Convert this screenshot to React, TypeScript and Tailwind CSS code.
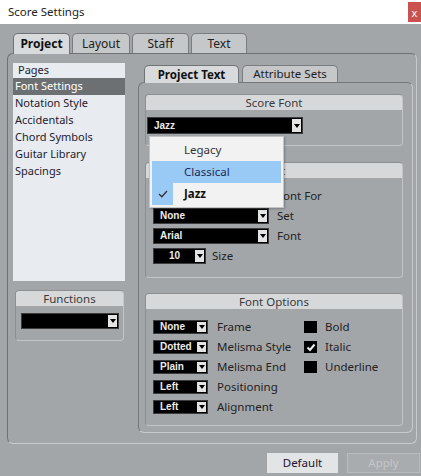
import React from "react";

const ui = "font-['Noto_Sans',sans-serif]";
const sel = "font-['Liberation_Sans',Arial,sans-serif] font-bold text-[10px] text-[#ececec]";

function Arrow() {
  return (
    <div className="w-0 h-0 border-l-[3px] border-r-[3px] border-t-[4px] border-l-transparent border-r-transparent border-t-black" />
  );
}

function Select({ value, w, h = "h-[16px]", center = false }: { value: string; w: string; h?: string; center?: boolean }) {
  return (
    <div className={`flex ${w} ${h} bg-black border border-[#3c3c3c]`}>
      <div className={`flex-1 flex items-center ${center ? "justify-center" : "pl-[6px]"} ${sel} leading-none`}>
        {value}
      </div>
      <div className="w-[9px] my-[1px] mr-[1px] bg-[#e4e4e4] flex items-center justify-center">
        <Arrow />
      </div>
    </div>
  );
}

function Group({ title, h, children, className = "" }: { title: string; h: string; children?: React.ReactNode; className?: string }) {
  return (
    <div
      className={`${h} ${className} flex flex-col rounded-[4px] border-l border-t border-[#8c8f92] border-r-[#c3c5c7] border-b-[#c3c5c7] border-r border-b`}
    >
      <div className="h-[15px] bg-[#d6d8da] rounded-t-[3px] flex items-center justify-center text-[11.5px] text-[#3a3a3a] leading-none">
        {title}
      </div>
      {children}
    </div>
  );
}

function Check({ on }: { on?: boolean }) {
  return (
    <div className="w-[13px] h-[12px] bg-black flex items-center justify-center">
      {on && (
        <svg width="10" height="9" viewBox="0 0 10 9">
          <polyline points="1.5,4.5 4,7 8.5,1.5" fill="none" stroke="#f0f0f0" strokeWidth="2" />
        </svg>
      )}
    </div>
  );
}

const pages = ["Notation Style", "Accidentals", "Chord Symbols", "Guitar Library", "Spacings"];

const opts: [string, string, string?, boolean?][] = [
  ["None", "Frame", "Bold", false],
  ["Dotted", "Melisma Style", "Italic", true],
  ["Plain", "Melisma End", "Underline", false],
  ["Left", "Positioning"],
  ["Left", "Alignment"],
];

export default function App() {
  return (
    <div className={`${ui} w-[421px] h-[476px] bg-[#a3a6a9] flex flex-col relative overflow-hidden`}>
      {/* title bar */}
      <div className="h-[24px] bg-white flex items-start shrink-0">
        <div className="pl-[8px] pt-[3px] text-[11.5px] text-[#222]">Score Settings</div>
        <div className="ml-auto mt-[2px] w-[13px] h-[20px] bg-[#c9514f] text-white text-[11px] flex items-center justify-center leading-none">
          x
        </div>
      </div>

      <div className="px-[7px] pt-[8px]">
        {/* main tabs */}
        <div className="flex items-end h-[21px] pl-[6px] gap-[2px]">
          <div className="w-[57px] h-[21px] -mb-px z-10 rounded-t-[5px] border border-b-0 border-[#707376] bg-[#d8dadc] flex items-center justify-center text-[12px] font-bold text-[#111]">
            Project
          </div>
          <div className="w-[58px] h-[20px] rounded-t-[5px] border border-b-0 border-[#7a7d80] bg-[#c5c7c9] flex items-center justify-center text-[12px] text-[#222]">
            Layout
          </div>
          <div className="w-[57px] h-[20px] rounded-t-[5px] border border-b-0 border-[#7a7d80] bg-[#c5c7c9] flex items-center justify-center text-[12px] text-[#222]">
            Staff
          </div>
          <div className="w-[56px] h-[20px] rounded-t-[5px] border border-b-0 border-[#7a7d80] bg-[#c5c7c9] flex items-center justify-center text-[12px] text-[#222]">
            Text
          </div>
        </div>

        {/* main panel */}
        <div className="w-[410px] h-[391px] rounded-[6px] border-l border-t border-[#6f7275] border-r border-b border-r-[#c8cacc] border-b-[#c8cacc] flex items-start pl-[5px] pt-[9px]">
          {/* left column */}
          <div className="w-[112px] flex flex-col">
            <div className="h-[218px] bg-[#e8ecf0] flex flex-col text-[11px] text-[#1e1b2e]">
              <div className="h-[15px] pl-[5px] flex items-center">Pages</div>
              <div className="h-[17px] pl-[2px] flex items-center bg-[#6d7073] text-white">Font Settings</div>
              {pages.map((p) => (
                <div key={p} className="h-[17px] pl-[2px] flex items-center">
                  {p}
                </div>
              ))}
            </div>
            <Group title="Functions" h="h-[51px]" className="mt-[9px] ml-[2px] w-[109px]">
              <div className="pl-[5px] pt-[7px]">
                <Select value="" w="w-[98px]" />
              </div>
            </Group>
          </div>

          {/* right column */}
          <div className="ml-[13px] mt-[1px] w-[275px] flex flex-col">
            <div className="flex items-end h-[18px] pl-[6px] gap-[3px]">
              <div className="w-[95px] h-[18px] -mb-px z-10 rounded-t-[5px] border border-b-0 border-[#707376] bg-[#d8dadc] flex items-center justify-center text-[11.5px] font-bold text-[#111]">
                Project Text
              </div>
              <div className="w-[96px] h-[17px] rounded-t-[5px] border border-b-0 border-[#7a7d80] bg-[#c5c7c9] flex items-center justify-center text-[11.5px] text-[#222]">
                Attribute Sets
              </div>
            </div>
            <div className="h-[351px] rounded-[6px] border-l border-t border-[#75787b] border-r border-b border-r-[#c8cacc] border-b-[#c8cacc] pl-[6px] pt-[11px] flex flex-col">
              <Group title="Score Font" h="h-[52px]" className="w-[258px]">
                <div className="pl-[1px] pt-[7px]">
                  <Select value="Jazz" w="w-[156px]" h="h-[17px]" />
                </div>
              </Group>

              <Group title="Text" h="h-[116px]" className="w-[258px] mt-[16px]">
                <div className="pl-[7px] pt-[10px] flex flex-col gap-[4px] text-[11.5px] text-[#222]">
                  <div className="h-[16px] flex items-center">
                    <Select value="" w="w-[116px]" />
                    <span className="ml-[8px]">Font For</span>
                  </div>
                  <div className="h-[16px] flex items-center">
                    <Select value="None" w="w-[116px]" />
                    <span className="ml-[8px]">Set</span>
                  </div>
                  <div className="h-[16px] flex items-center">
                    <Select value="Arial" w="w-[116px]" />
                    <span className="ml-[8px]">Font</span>
                  </div>
                  <div className="h-[16px] flex items-center">
                    <Select value="10" w="w-[53px]" center />
                    <span className="ml-[6px]">Size</span>
                  </div>
                </div>
              </Group>

              <Group title="Font Options" h="h-[133px]" className="w-[258px] mt-[15px]">
                <div className="pl-[7px] pt-[11px] flex flex-col gap-[6px] text-[11.5px] text-[#222]">
                  {opts.map(([v, l, c, on], i) => (
                    <div key={i} className="h-[14px] flex items-center">
                      <div className="w-[151px] flex items-center">
                        <Select value={v} w="w-[55px]" h="h-[14px]" />
                        <span className="ml-[9px]">{l}</span>
                      </div>
                      {c && (
                        <div className="flex items-center">
                          <Check on={on} />
                          <span className="ml-[8px]">{c}</span>
                        </div>
                      )}
                    </div>
                  ))}
                </div>
              </Group>
            </div>
          </div>
        </div>
      </div>

      {/* buttons */}
      <div className="flex justify-end gap-[9px] pr-[1px] mt-[9px]">
        <div className="w-[71px] h-[20px] bg-[#e2e4e6] flex items-center justify-center text-[11.5px] text-[#1a1530]">
          Default
        </div>
        <div className="w-[73px] h-[20px] bg-[#a9acaf] border border-[#b9bbbd] flex items-center justify-center text-[11.5px] text-[#c4c6c8]">
          Apply
        </div>
      </div>

      {/* open dropdown */}
      <div className="absolute left-[149px] top-[136px] w-[135px] h-[72px] bg-[#f2f2f2] border border-[#c4c4c4] shadow-[1px_1px_2px_rgba(0,0,0,0.25)] px-[2px] py-[2px] flex flex-col text-[11.5px]">
        <div className="h-[22px] flex items-center pl-[32px] text-[#333]">Legacy</div>
        <div className="h-[22px] flex items-center pl-[32px] bg-[#99c9f5] text-[#1c2a55]">Classical</div>
        <div className="h-[22px] flex items-center">
          <div className="w-[21px] h-[22px] bg-[#99c9f5] flex items-center justify-center">
            <svg width="10" height="8" viewBox="0 0 10 8">
              <polyline points="1,4 3.8,6.8 9,1" fill="none" stroke="#333" strokeWidth="1.3" />
            </svg>
          </div>
          <span className="pl-[11px] font-bold text-[#111]">Jazz</span>
        </div>
      </div>
    </div>
  );
}
